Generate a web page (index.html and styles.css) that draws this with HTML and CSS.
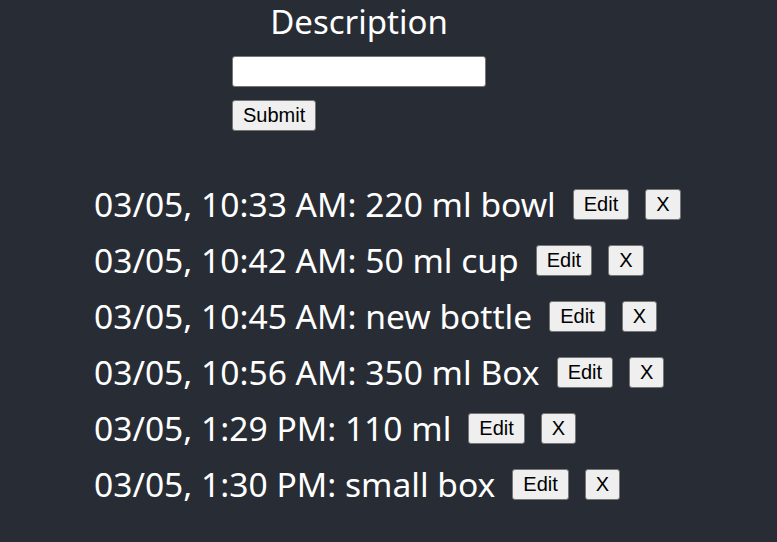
FILE: index.html
```html
<!DOCTYPE html>
<html>
<head>
<meta charset="utf-8">
<link rel="stylesheet" href="styles.css">
</head>
<body>
<div class="app">
  <form class="entry-form">
    <label class="label" for="desc">Description</label>
    <input id="desc" class="desc-input" type="text">
    <button class="btn submit" type="button">Submit</button>
  </form>
  <ul class="entries">
    <li class="entry"><span class="entry-text">03/05, 10:33 AM: 220 ml bowl</span><button class="btn small">Edit</button><button class="btn small">X</button></li>
    <li class="entry"><span class="entry-text">03/05, 10:42 AM: 50 ml cup</span><button class="btn small">Edit</button><button class="btn small">X</button></li>
    <li class="entry"><span class="entry-text">03/05, 10:45 AM: new bottle</span><button class="btn small">Edit</button><button class="btn small">X</button></li>
    <li class="entry"><span class="entry-text">03/05, 10:56 AM: 350 ml Box</span><button class="btn small">Edit</button><button class="btn small">X</button></li>
    <li class="entry"><span class="entry-text">03/05, 1:29 PM: 110 ml</span><button class="btn small">Edit</button><button class="btn small">X</button></li>
    <li class="entry"><span class="entry-text">03/05, 1:30 PM: small box</span><button class="btn small">Edit</button><button class="btn small">X</button></li>
  </ul>
</div>
</body>
</html>
```

FILE: styles.css
```css
html, body {
  margin: 0;
  padding: 0;
  background: #282c34;
  height: 100%;
}
.app {
  color: #ffffff;
  font-family: "Noto Sans", "Open Sans", sans-serif;
}
.entry-form {
  display: flex;
  flex-direction: column;
  align-items: flex-start;
  width: 254px;
  margin: 0 0 0 232px;
  padding-top: 1px;
}
.label {
  align-self: center;
  font-size: 33px;
  line-height: 42px;
  margin-bottom: 13px;
}
.desc-input {
  box-sizing: border-box;
  width: 254px;
  height: 31px;
  border: 1px solid #767676;
  border-radius: 3px;
  background: #ffffff;
  margin: 0;
}
.btn {
  font-family: "Liberation Sans", Arial, sans-serif;
  font-size: 20px;
  height: 31px;
  background: #efefef;
  color: #000000;
  border: 1px solid #767676;
  border-radius: 3px;
  margin: 0;
  box-sizing: border-box;
}
.submit {
  margin-top: 13px;
  padding: 0 10px;
}
.entries {
  list-style: none;
  margin: 45px 0 0 94px;
  padding: 0;
}
.entry {
  display: flex;
  align-items: center;
  height: 56px;
}
.entry-text {
  font-size: 33.6px;
  margin-right: 17px;
}
.small {
  padding: 0 10px;
  margin-right: 16px;
}
```
